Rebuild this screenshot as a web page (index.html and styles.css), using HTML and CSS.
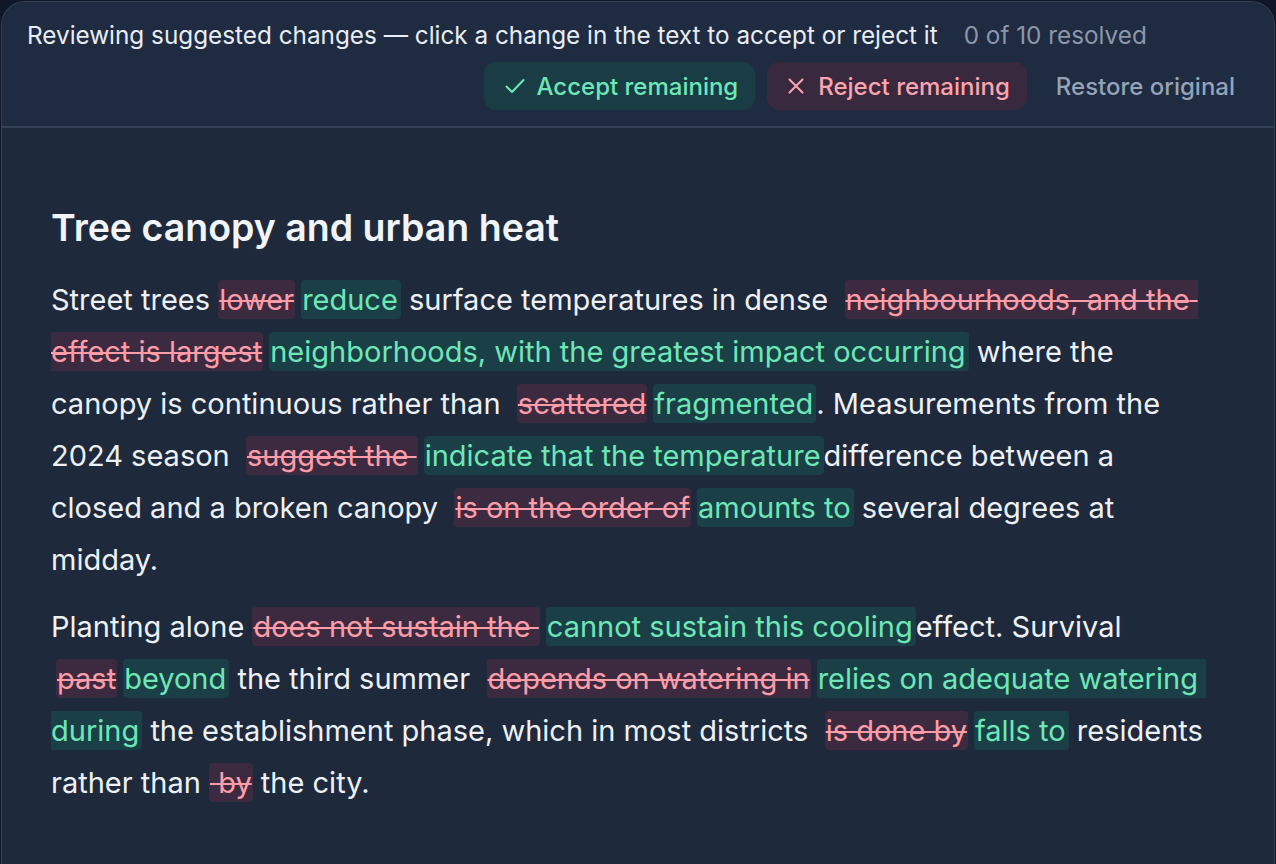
FILE: index.html
```html
<!DOCTYPE html>
<html lang="en">
<head>
  <meta charset="UTF-8">
  <meta name="viewport" content="width=device-width, initial-scale=1.0">
  <title>Suggested changes</title>
  <link rel="stylesheet" href="styles.css">
</head>
<body>
<div class="card">
  <div class="review-bar">
    <div class="status">
      <span class="status-text">Reviewing suggested changes — click a change in the text to accept or reject it</span>
      <span class="count">0 of 10 resolved</span>
    </div>
    <div class="actions">
      <button class="btn accept">
        <svg viewBox="0 0 24 24" width="24" height="24"><polyline points="3.5 12.5 9 18 20.5 6" fill="none" stroke="currentColor" stroke-width="2" stroke-linecap="round" stroke-linejoin="round"/></svg>
        Accept remaining
      </button>
      <button class="btn reject">
        <svg viewBox="0 0 24 24" width="24" height="24"><path d="M5.5 5.5l13 13M18.5 5.5l-13 13" fill="none" stroke="currentColor" stroke-width="2" stroke-linecap="round"/></svg>
        Reject remaining
      </button>
      <button class="btn restore">Restore original</button>
    </div>
  </div>

  <div class="doc">
    <h2>Tree canopy and urban heat</h2>
    <p>Street trees <del>lower</del><ins>reduce</ins> surface temperatures in dense  <del>neighbourhoods, and the effect is largest</del><ins>neighborhoods, with the greatest impact occurring</ins> where the canopy is continuous rather than  <del>scattered</del><ins>fragmented</ins>. Measurements from the 2024 season  <del>suggest the </del><ins>indicate that the temperature</ins>difference between a closed and a broken canopy  <del>is on the order of</del><ins>amounts to</ins> several degrees at midday.</p>
    <p>Planting alone <del>does not sustain the </del><ins>cannot sustain this cooling</ins>effect. Survival  <del class="lead">past</del><ins>beyond</ins> the third summer  <del>depends on watering in</del><ins>relies on adequate watering during</ins> the establishment phase, which in most districts  <del>is done by</del><ins>falls to</ins> residents rather than <del> by</del> the city.</p>
  </div>
</div>
</body>
</html>
```

FILE: styles.css
```css
body {
  margin: 0;
  padding: 1px 1px 0;
  background: #0f1729;
  font-family: Inter, "Noto Sans", sans-serif;
  color: #e2e8f0;
  overflow: hidden;
}
.card {
  background: #1e293b;
  border: 1px solid #334155;
  border-bottom: none;
  border-radius: 24px 24px 0 0;
  min-height: 900px;
}
.review-bar {
  background: #1f2b41;
  border-radius: 24px 24px 0 0;
  border-bottom: 2px solid #334155;
  padding: 18px 22px 16px 25px;
  display: flex;
  flex-wrap: wrap;
  row-gap: 12px;
}
.status {
  display: flex;
  align-items: baseline;
  gap: 26px;
  font-size: 24.3px;
  line-height: 30px;
}
.status-text { color: #e8edf4; }
.count { color: #8b97a8; }
.actions {
  margin-left: auto;
  display: flex;
  gap: 12px;
}
.btn {
  display: flex;
  align-items: center;
  gap: 10px;
  height: 48px;
  padding: 0 17px;
  border: none;
  border-radius: 12px;
  background: transparent;
  font-family: inherit;
  font-size: 24px;
  font-weight: 500;
  cursor: pointer;
}
.accept { background: #1a3c44; color: #6ee7b7; padding-left: 19px; }
.reject { background: #38293e; color: #fda4af; }
.restore { color: #94a3b8; }
.doc {
  padding: 50px 66px 50px 49px;
}
.doc h2 {
  margin: 26px 0 22px;
  font-size: 37.5px;
  line-height: 48px;
  font-weight: 600;
  color: #f1f5f9;
}
.doc p {
  margin: 0 0 15px;
  font-size: 29px;
  line-height: 52px;
  white-space: pre-wrap;
  color: #edf1f6;
}
del, ins {
  padding: 2px 1px;
  border-radius: 4px;
  -webkit-box-decoration-break: slice;
  box-decoration-break: slice;
}
del {
  background: #3c2b40;
  color: #ff9ca7;
  text-decoration: line-through;
  text-decoration-thickness: 2px;
}
del.lead { margin-left: 5px; }
ins {
  margin-left: 6px;
  padding-right: 3px;
  background: #1b3f46;
  color: #6ee7b7;
  text-decoration: none;
}
```
